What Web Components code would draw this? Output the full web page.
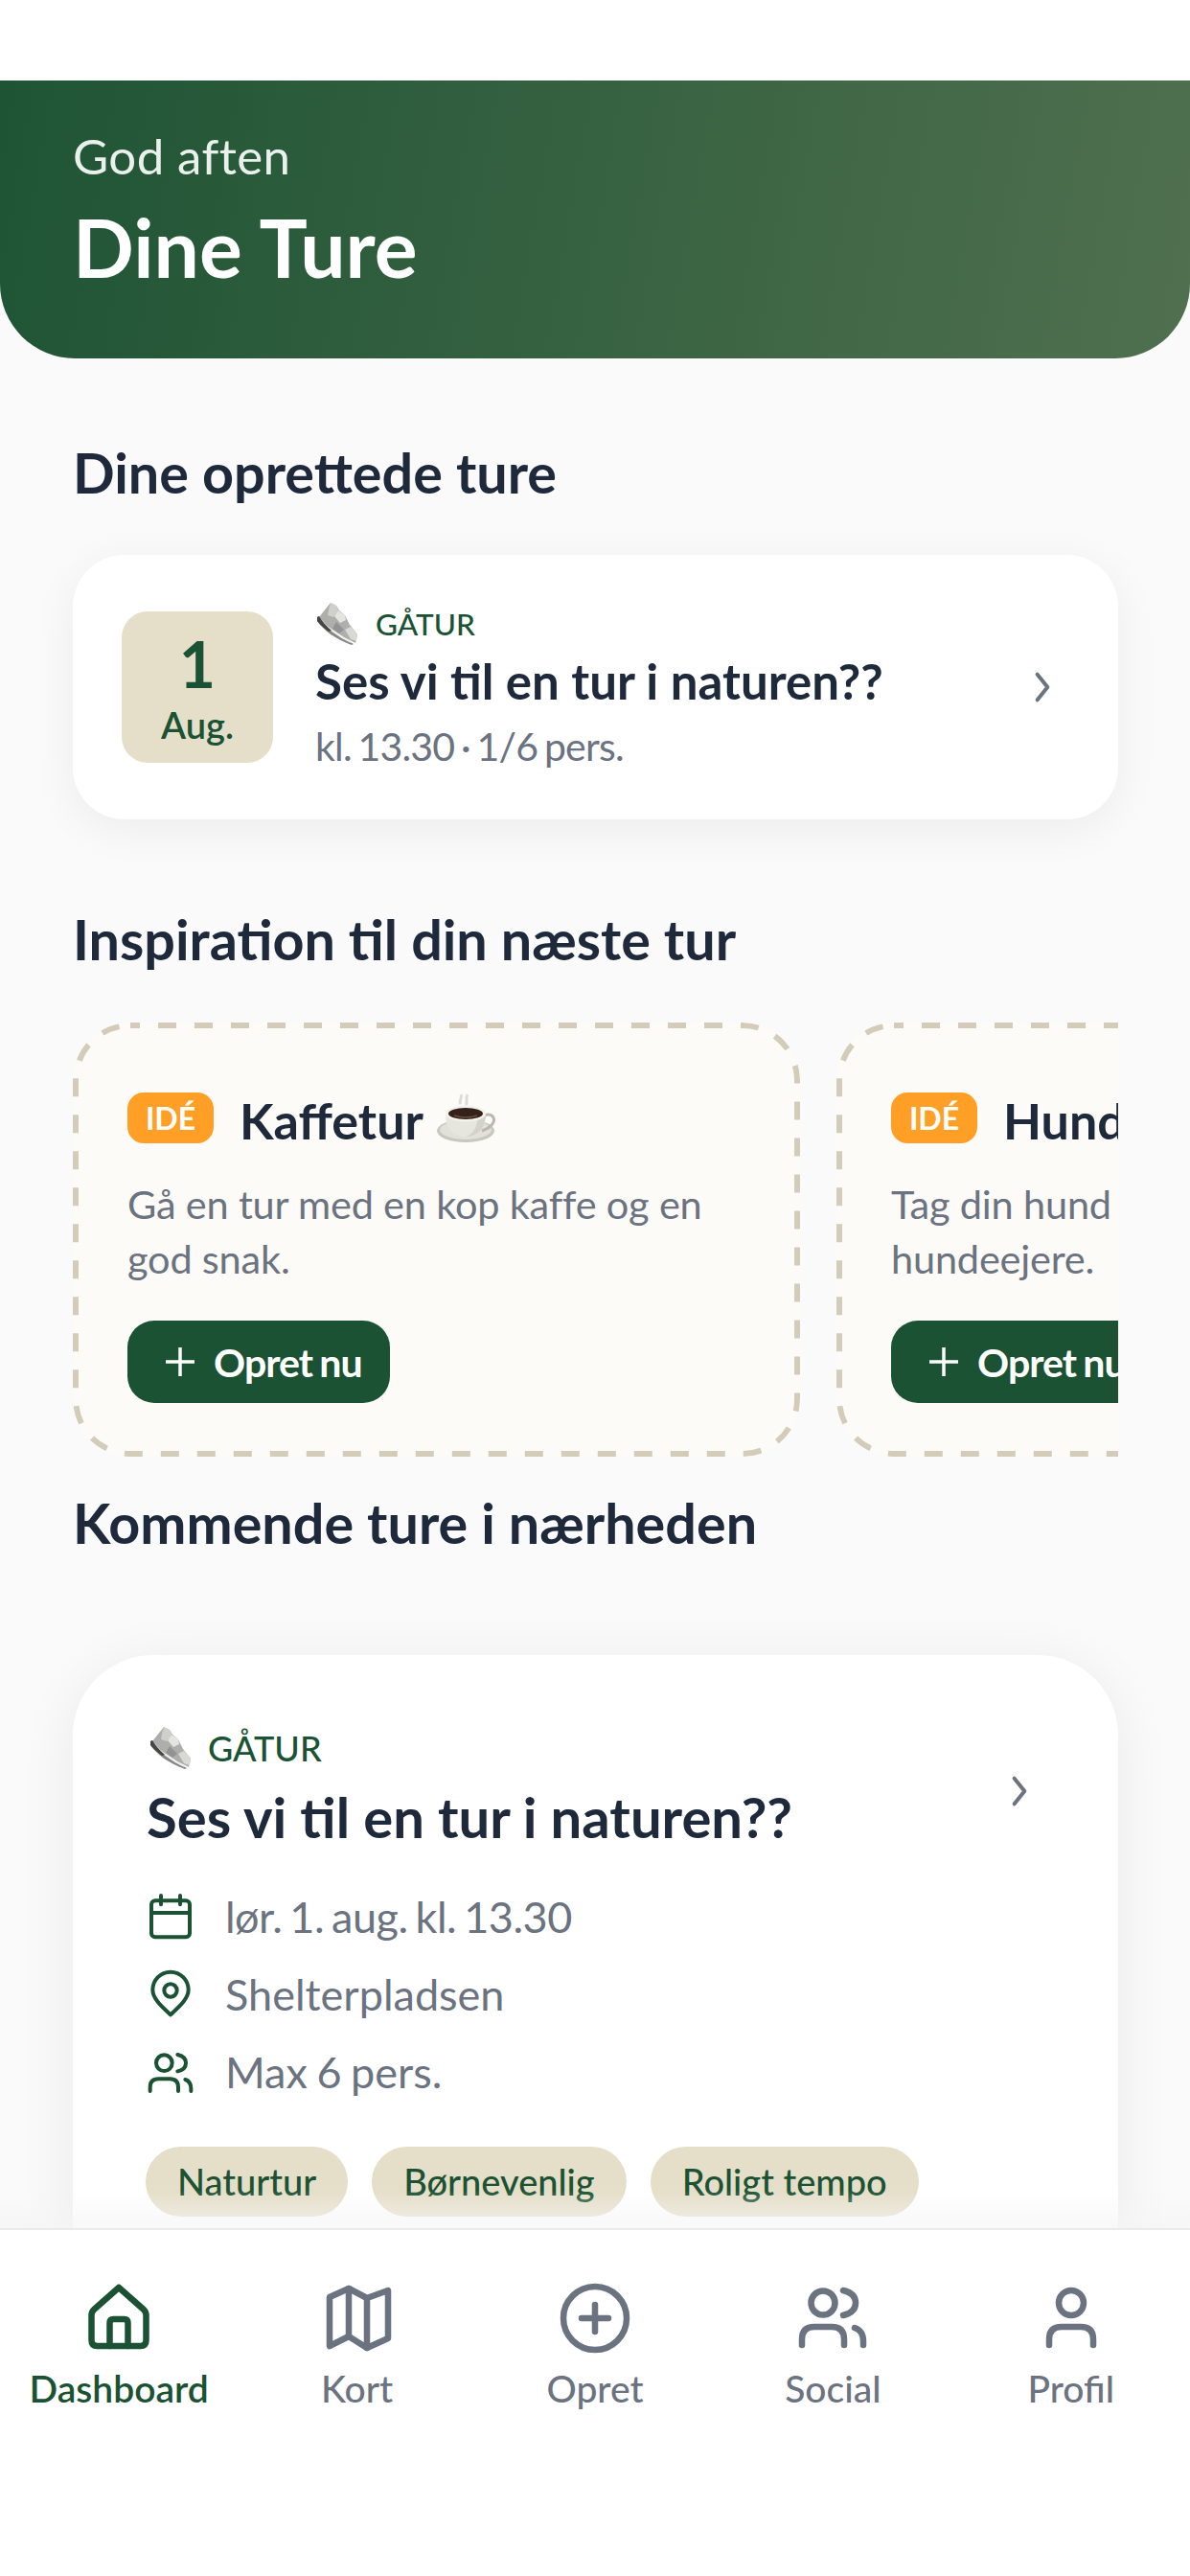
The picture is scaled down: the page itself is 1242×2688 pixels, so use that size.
<!DOCTYPE html>
<html lang="da">
<head>
<meta charset="utf-8">
<title>Dine Ture</title>
<style>
  html, body { margin: 0; padding: 0; }
  body { width: 1242px; height: 2688px; overflow: hidden; background: #fff; font-family: Lato, "Open Sans", sans-serif; }
  app-shell { width: 1242px; height: 2688px; }
</style>
</head>
<body>
<app-shell>
  <hero-header greeting="God aften" title="Dine Ture"></hero-header>

  <section-title style="--top:83px;--bottom:50px">Dine oprettede ture</section-title>
  <own-trip day="1" month="Aug." kind="GÅTUR" title="Ses vi til en tur i naturen??" meta="kl. 13.30 · 1/6 pers."></own-trip>

  <section-title style="--top:89px;--bottom:51px">Inspiration til din næste tur</section-title>
  <idea-row>
    <idea-card title="Kaffetur" cup line1="Gå en tur med en kop kaffe og en" line2="god snak."></idea-card>
    <idea-card title="Hund" line1="Tag din hund" line2="hundeejere."></idea-card>
  </idea-row>

  <section-title style="--top:33px;--bottom:102px">Kommende ture i nærheden</section-title>
  <nearby-card kind="GÅTUR" title="Ses vi til en tur i naturen??">
    <info-line icon="calendar" style="letter-spacing:-.5px;word-spacing:-3px">lør. 1. aug. kl. 13.30</info-line>
    <info-line icon="pin">Shelterpladsen</info-line>
    <info-line icon="people" style="word-spacing:-2px">Max 6 pers.</info-line>
    <trip-tag slot="tags">Naturtur</trip-tag>
    <trip-tag slot="tags">Børnevenlig</trip-tag>
    <trip-tag slot="tags">Roligt tempo</trip-tag>
  </nearby-card>

  <bottom-nav slot="nav">
    <nav-item icon="home" active>Dashboard</nav-item>
    <nav-item icon="map">Kort</nav-item>
    <nav-item icon="plus">Opret</nav-item>
    <nav-item icon="people">Social</nav-item>
    <nav-item icon="user">Profil</nav-item>
  </bottom-nav>
</app-shell>

<script>
const GREEN = "#1a5233";
const INK = "#1e293b";
const GREY = "#6b7280";
const SAND = "#e5dfc9";

// all on a 72 grid, scaled by the size attribute
const ICONS = {
  home: `<path d="M36 6 10 29q-2.500 2.500-2.500 6v26q0 6 6 6h45q6 0 6-6V35q0-3.500-2.500-6Z"/><path d="M26.500 67V43q0-4 4-4h11q4 0 4 4v24"/>`,
  map: `<path d="M7 16 27 7l19 10 22-8v50l-22 10-19-12-20 10Z"/><path d="M27 7v50M46 17v52"/>`,
  plus: `<circle cx="36" cy="38" r="33"/><path d="M36 24v28M22 38h28"/>`,
  people: `<circle cx="26" cy="22" r="12.500"/><path d="M4 66v-6q0-13 13-13h18q13 0 13 13v6"/><path d="M47 9q13 3 13 13t-13 13"/><path d="M59 48q9 3 9 14v4"/>`,
  user: `<circle cx="36" cy="22" r="13"/><path d="M13 66v-6q0-13 13-13h20q13 0 13 13v6"/>`,
  calendar: `<rect x="6" y="11" width="60" height="57" rx="6"/><path d="M6 30h60M21 3v14M51 3v14"/>`,
  pin: `<path d="M36 68C22 55 8 43 8 29a28 28 0 0 1 56 0c0 14-14 26-28 39Z"/><circle cx="36" cy="30" r="10"/>`,
  chevron: `<path d="M24 6l24 30-24 30"/>`
};

class UiIcon extends HTMLElement {
  connectedCallback() {
    const size = this.getAttribute("size") || 72;
    const sw = this.getAttribute("stroke") || 6.5;
    this.attachShadow({ mode: "open" });
    this.shadowRoot.innerHTML = `
      <style>
        :host { display: block; width: ${size}px; height: ${size}px; flex: none; }
        svg { display: block; width: 100%; height: 100%; overflow: visible; fill: none; stroke: currentColor; stroke-width: ${sw}; stroke-linecap: round; stroke-linejoin: round; }
      </style>
      <svg viewBox="0 0 72 72" aria-hidden="true">${ICONS[this.getAttribute("name")]}</svg>`;
  }
}

// grey trainer, the emoji from the reference
class ShoeMark extends HTMLElement {
  connectedCallback() {
    this.attachShadow({ mode: "open" });
    this.shadowRoot.innerHTML = `
      <style>:host { display: block; width: 42px; height: 44px; flex: none; margin-left: 2px; } svg { display: block; width: 100%; height: 100%; }</style>
      <svg viewBox="0 0 42 44" role="img" aria-label="sko">
        <path d="M2 15 14 0l6 3 3 5 6 5 5 10 8 10-2 9-12-6-18-12Z" fill="#aeaeab"/>
        <path d="M14 0l6 3 2 5-5 7-6-2 1-6Z" fill="#cfcfcc"/>
        <path d="M22 8l7 5 1 5-6 3-6-7Z" fill="#e4e4e1"/>
        <path d="M29 28l6-3 7 8-1 7-6-2Z" fill="#d8d8d5"/>
        <path d="M20 20l8 8-5 4-7-5Z" fill="#939395"/>
        <path d="M0 15l2-1c6 9 16 19 36 29l-2 1C19 38 6 28 0 19Z" fill="#858583"/>
        <path d="M3 17c6 8 18 18 32 24" stroke="#ececea" stroke-width="1.500" fill="none"/>
        <path d="M0 15l2-1c3 5 7 10 13 15l-3 1C7 26 3 23 0 19Z" fill="#454545"/>
      </svg>`;
  }
}

class CupMark extends HTMLElement {
  connectedCallback() {
    this.attachShadow({ mode: "open" });
    this.shadowRoot.innerHTML = `
      <style>:host { display: block; width: 64px; height: 56px; flex: none; } svg { display: block; width: 100%; height: 100%; }</style>
      <svg viewBox="0 0 64 56" role="img" aria-label="kaffe">
        <path d="M26 13c-3-3 2-6 0-10M31 14c3-3-1-6 2-11" stroke="#dcdcd8" stroke-width="3" fill="none"/>
        <ellipse cx="31" cy="41" rx="30" ry="12" fill="#c8c7be"/>
        <ellipse cx="31" cy="40" rx="27" ry="10" fill="#e2e1d9"/>
        <path d="M50 25c8-3 12 2 10 7-2 5-7 7-12 9" stroke="#b9b7ae" stroke-width="3" fill="none"/>
        <path d="M10 23c0 15 8 24 21 24s21-9 21-24Z" fill="#e6e5de"/>
        <path d="M31 47c13 0 21-9 21-24h-8c0 13-5 22-13 24Z" fill="#d4d3cb"/>
        <ellipse cx="31" cy="23" rx="21" ry="8.500" fill="#f3f2ec"/>
        <ellipse cx="31" cy="23" rx="18" ry="6" fill="#33211a"/>
        <path d="M19 25q12 4 24 0" stroke="#6a4c3c" stroke-width="1.500" fill="none"/>
      </svg>`;
  }
}

class AppShell extends HTMLElement {
  connectedCallback() {
    this.attachShadow({ mode: "open" });
    this.shadowRoot.innerHTML = `
      <style>
        :host { display: flex; flex-direction: column; background: #fff; }
        .top { height: 84px; flex: none; }
        .scroll { flex: 1; min-height: 0; overflow: hidden; background: #fafafa; }
      </style>
      <div class="top"></div>
      <div class="scroll"><slot></slot></div>
      <slot name="nav"></slot>`;
  }
}

class HeroHeader extends HTMLElement {
  connectedCallback() {
    this.attachShadow({ mode: "open" });
    this.shadowRoot.innerHTML = `
      <style>
        :host { display: block; height: 290px; box-sizing: border-box; padding: 49px 76px 0; color: #fff;
          background: linear-gradient(100deg, #1e5434 0%, #50704f 100%); border-radius: 0 0 78px 78px; }
        .hi { font-size: 51px; line-height: 60px; font-weight: 400; color: #eaf1ec; letter-spacing: .4px; }
        h1 { margin: 19px 0 0; font-size: 84px; line-height: 92px; font-weight: 700; }
      </style>
      <div class="hi">${this.getAttribute("greeting")}</div>
      <h1>${this.getAttribute("title")}</h1>`;
  }
}

class SectionTitle extends HTMLElement {
  connectedCallback() {
    this.attachShadow({ mode: "open" });
    this.shadowRoot.innerHTML = `
      <style>
        :host { display: block; margin: var(--top) 76px var(--bottom); font-size: 57.500px; line-height: 72px; font-weight: 700; color: ${INK}; white-space: nowrap; }
      </style>
      <slot></slot>`;
  }
}

class OwnTrip extends HTMLElement {
  connectedCallback() {
    const a = n => this.getAttribute(n);
    this.attachShadow({ mode: "open" });
    this.shadowRoot.innerHTML = `
      <style>
        :host { display: flex; align-items: center; height: 276px; box-sizing: border-box; margin: 0 75px 0 76px; padding: 0 63px 0 51px;
          background: #fff; border-radius: 54px; box-shadow: 0 10px 48px rgba(0,0,0,.06); }
        .date { width: 158px; height: 158px; flex: none; background: ${SAND}; border-radius: 27px; color: ${GREEN}; display: flex; flex-direction: column; align-items: center; }
        .d { font-size: 66px; line-height: 70px; font-weight: 700; margin-top: 20px; }
        .m { font-size: 38px; line-height: 44px; font-weight: 600; margin-top: 6px; }
        .body { flex: 1; min-width: 0; margin: 16px 0 0 44px; }
        .kind { display: flex; align-items: center; gap: 19px; height: 42px; margin-top: -16px; color: ${GREEN}; font-size: 31.500px; font-weight: 500; }
        .t { font-size: 51px; line-height: 60px; font-weight: 700; color: ${INK}; margin-top: 9px; white-space: nowrap; }
        .meta { font-size: 41px; line-height: 50px; color: ${GREY}; margin-top: 13px; letter-spacing: -.8px; word-spacing: -3px; }
        ui-icon { color: ${GREY}; }
      </style>
      <div class="date"><div class="d">${a("day")}</div><div class="m">${a("month")}</div></div>
      <div class="body">
        <div class="kind"><shoe-mark></shoe-mark><span>${a("kind")}</span></div>
        <div class="t">${a("title")}</div>
        <div class="meta">${a("meta")}</div>
      </div>
      <ui-icon name="chevron" size="32" stroke="9"></ui-icon>`;
  }
}

class IdeaRow extends HTMLElement {
  connectedCallback() {
    this.attachShadow({ mode: "open" });
    this.shadowRoot.innerHTML = `
      <style>
        :host { display: flex; gap: 38px; margin: 0 75px 0 76px; overflow: hidden; }
      </style>
      <slot></slot>`;
  }
}

class IdeaCard extends HTMLElement {
  connectedCallback() {
    const a = n => this.getAttribute(n);
    this.attachShadow({ mode: "open" });
    this.shadowRoot.innerHTML = `
      <style>
        :host { display: block; position: relative; width: 759px; height: 453px; flex: none; box-sizing: border-box; padding: 70px 57px 0; background: #fdfbf7;
          border-radius: 60px; overflow: hidden; white-space: nowrap; }
        .dash { position: absolute; left: 0; top: 0; width: 759px; height: 453px; fill: none; stroke: #d3ccb9; stroke-width: 6; stroke-dasharray: 19 19; stroke-dashoffset: 9; }
        .head { display: flex; align-items: center; height: 58px; }
        .badge { width: 90px; height: 53px; flex: none; display: flex; align-items: center; justify-content: center; background: #ff9f25; border-radius: 17px; color: #fff; font-size: 32px; font-weight: 700; }
        h3 { margin: 5px 0 0 27px; font-size: 52px; font-weight: 700; color: ${INK}; display: flex; align-items: center; gap: 13px; }
        cup-mark { margin-top: -3px; }
        p { margin: 33px 0 0; font-size: 41.500px; letter-spacing: -.2px; line-height: 57px; color: ${GREY}; }
        .btn { display: flex; align-items: center; width: 274px; height: 86px; margin-top: 36px; box-sizing: border-box; padding-left: 39px; background: ${GREEN}; border-radius: 28px; color: #fff; font-size: 41px; font-weight: 700; gap: 19px; letter-spacing: -.9px; word-spacing: -2px; }
        .btn svg { width: 32px; height: 32px; flex: none; stroke: #fff; stroke-width: 3.500; fill: none; }
      </style>
      <svg class="dash" viewBox="0 0 759 453" aria-hidden="true"><rect x="3" y="3" width="753" height="447" rx="57"/></svg>
      <div class="head">
        <div class="badge">IDÉ</div>
        <h3>${a("title")}${this.hasAttribute("cup") ? "<cup-mark></cup-mark>" : ""}</h3>
      </div>
      <p>${a("line1")}<br>${a("line2")}</p>
      <div class="btn"><svg viewBox="0 0 32 32"><path d="M16 1v30M1 16h30"/></svg><span>Opret nu</span></div>`;
  }
}

class NearbyCard extends HTMLElement {
  connectedCallback() {
    const a = n => this.getAttribute(n);
    this.attachShadow({ mode: "open" });
    this.shadowRoot.innerHTML = `
      <style>
        :host { display: block; position: relative; margin: 0 75px 0 76px; padding: 75px 77px 90px; background: #fff; border-radius: 84px; box-shadow: 0 10px 60px rgba(0,0,0,.07); }
        .kind { display: flex; align-items: center; gap: 18px; height: 44px; padding-left: 2px; color: ${GREEN}; font-size: 36px; font-weight: 500; }
        .t { font-size: 58px; line-height: 70px; font-weight: 700; color: ${INK}; margin-top: 15px; white-space: nowrap; }
        .info { display: flex; flex-direction: column; margin-top: 28px; }
        .tags { display: flex; gap: 25px; margin-top: 38px; margin-left: -1px; }
        ui-icon { position: absolute; top: 126px; right: 87px; color: ${GREY}; }
      </style>
      <div class="kind"><shoe-mark></shoe-mark><span>${a("kind")}</span></div>
      <div class="t">${a("title")}</div>
      <div class="info"><slot></slot></div>
      <div class="tags"><slot name="tags"></slot></div>
      <ui-icon name="chevron" size="32" stroke="9"></ui-icon>`;
  }
}

class InfoLine extends HTMLElement {
  connectedCallback() {
    this.attachShadow({ mode: "open" });
    this.shadowRoot.innerHTML = `
      <style>
        :host { display: flex; align-items: center; height: 81px; gap: 33px; font-size: 45px; color: ${GREY}; }
        ui-icon { color: ${GREEN}; margin-left: 1px; }
      </style>
      <ui-icon name="${this.getAttribute("icon")}" size="48" stroke="6"></ui-icon>
      <slot></slot>`;
  }
}

class TripTag extends HTMLElement {
  connectedCallback() {
    this.attachShadow({ mode: "open" });
    this.shadowRoot.innerHTML = `
      <style>
        :host { display: block; height: 73px; line-height: 73px; padding: 0 33px; border-radius: 37px; background: #e5dec8; color: ${GREEN}; font-size: 38px; font-weight: 500; white-space: nowrap; }
      </style>
      <slot></slot>`;
  }
}

class BottomNav extends HTMLElement {
  connectedCallback() {
    this.attachShadow({ mode: "open" });
    this.shadowRoot.innerHTML = `
      <style>
        :host { display: grid; grid-template-columns: repeat(5, 1fr); height: 363px; box-sizing: border-box; padding-top: 54px; background: #fff; border-top: 2px solid #e9eaec; position: relative; }
        /* the soft fade where the list runs under the bar */
        :host::before { content: ""; position: absolute; left: 0; right: 0; top: -42px; height: 40px; background: linear-gradient(rgba(245,245,245,0), rgba(245,245,245,.7)); pointer-events: none; }
      </style>
      <slot></slot>`;
  }
}

class NavItem extends HTMLElement {
  connectedCallback() {
    const on = this.hasAttribute("active");
    this.attachShadow({ mode: "open" });
    this.shadowRoot.innerHTML = `
      <style>
        :host { display: flex; flex-direction: column; align-items: center; color: ${on ? GREEN : GREY}; }
        .l { font-size: 39px; line-height: 46px; font-weight: ${on ? 600 : 500}; margin-top: 16px; white-space: nowrap; }
      </style>
      <ui-icon name="${this.getAttribute("icon")}" size="72" stroke="6.500"></ui-icon>
      <div class="l"><slot></slot></div>`;
  }
}

customElements.define("ui-icon", UiIcon);
customElements.define("shoe-mark", ShoeMark);
customElements.define("cup-mark", CupMark);
customElements.define("app-shell", AppShell);
customElements.define("hero-header", HeroHeader);
customElements.define("section-title", SectionTitle);
customElements.define("own-trip", OwnTrip);
customElements.define("idea-row", IdeaRow);
customElements.define("idea-card", IdeaCard);
customElements.define("nearby-card", NearbyCard);
customElements.define("info-line", InfoLine);
customElements.define("trip-tag", TripTag);
customElements.define("bottom-nav", BottomNav);
customElements.define("nav-item", NavItem);
</script>
</body>
</html>
